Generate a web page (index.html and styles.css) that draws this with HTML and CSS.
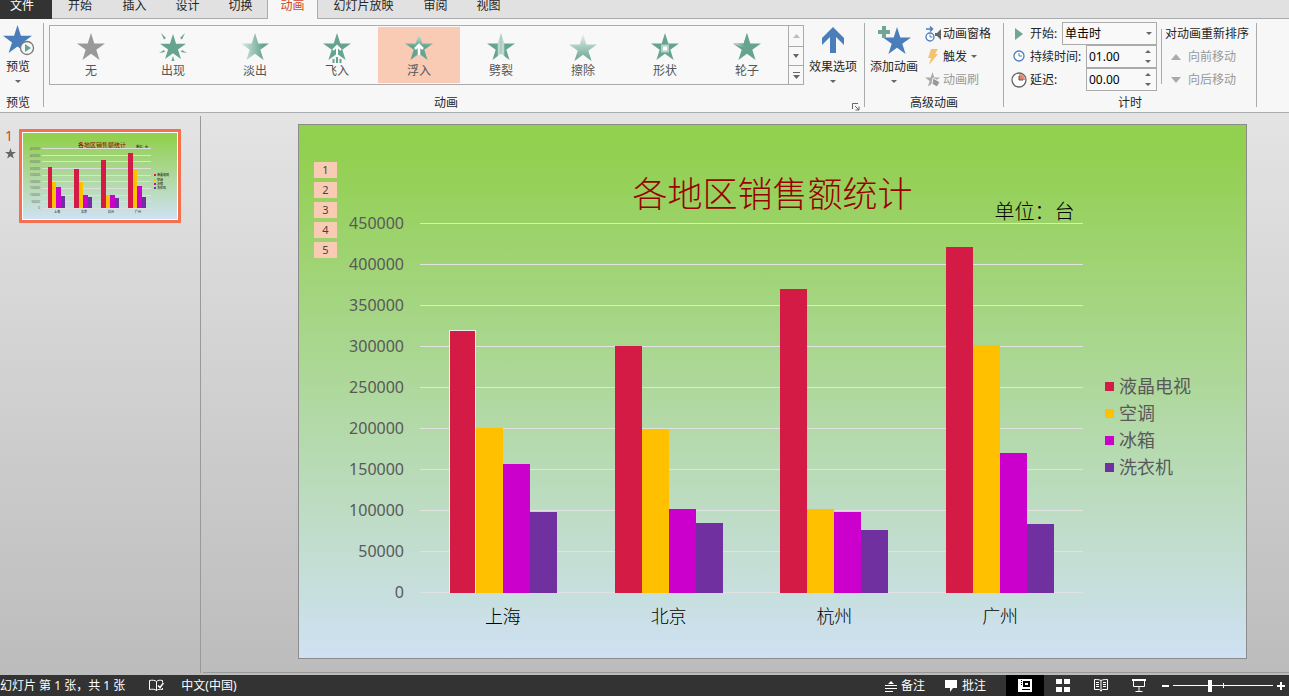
FILE: index.html
```html
<!DOCTYPE html>
<html lang="zh-CN">
<head>
	<meta charset="utf-8">
	<title>各地区销售额统计</title>
	<link rel="stylesheet" href="styles.css">
</head>
<body>
	<svg class="defs" width="0" height="0">
		<defs>
			<linearGradient id="fade"><stop offset="0" stop-color="#dcebe5"/><stop offset=".8" stop-color="#66a48f"/></linearGradient>
			<linearGradient id="float" x2="0" y2="1"><stop offset="0" stop-color="#dcebe5"/><stop offset=".5" stop-color="#66a48f"/></linearGradient>
			<linearGradient id="wipe" x2="0" y2="1"><stop offset="0" stop-color="#e4efeb"/><stop offset="1" stop-color="#66a48f"/></linearGradient>
			<linearGradient id="split"><stop offset=".36" stop-color="#66a48f"/><stop offset=".42" stop-color="#cfe2db"/><stop offset=".5" stop-color="#a2c8bb"/><stop offset=".58" stop-color="#cfe2db"/><stop offset=".64" stop-color="#66a48f"/></linearGradient>
			<linearGradient id="green" x2="0" y2="1"><stop offset=".05" stop-color="#92d050"/><stop offset="1" stop-color="#cfe1f3"/></linearGradient>
		</defs>
		<symbol id="star" viewBox="0 0 28 28"><path d="M14 0l3.3 10.4H28l-8.7 6.4L22.6 27 14 20.8 5.4 27l3.3-10.2L0 10.4h10.7z"/></symbol>
	</svg>

	<nav class="tabs">
		<a href="#" class="file">文件</a>
		<a href="#">开始</a>
		<a href="#">插入</a>
		<a href="#">设计</a>
		<a href="#">切换</a>
		<a href="#" class="active">动画</a>
		<a href="#" class="wide">幻灯片放映</a>
		<a href="#">审阅</a>
		<a href="#">视图</a>
	</nav>

	<section class="ribbon">
		<div class="group preview">
			<div class="body">
				<button class="big">
					<svg width="34" height="34" viewBox="0 0 34 34"><use href="#star" x="2" y="2" width="29" height="29" fill="#4a7ebb"/><circle cx="26" cy="25" r="6.5" fill="#f7f7f7" stroke="#777" stroke-width="1.3"/><path d="M24 21v8l6-4z" fill="#66a48f"/></svg>
					<span>预览</span>
					<i class="caret"></i>
				</button>
			</div>
			<footer>预览</footer>
		</div>
		<i class="sep"></i>

		<div class="group animation">
			<div class="body">
				<div class="gallery">
					<button><svg width="28" height="28"><use href="#star" fill="#999"/></svg>无</button>
					<button><svg width="28" height="28"><use href="#star" x="1" y="1" width="26" height="26" fill="#66a48f"/><path d="M2 0l5 5-2 1.500zM26 0l-5 5 2 1.500zM0 20l5-3 1 2zM28 20l-5-3-1 2zM12.500 28l1.500-5 1.500 5z" fill="#66a48f"/></svg>出现</button>
					<button><svg width="28" height="28"><use href="#star" fill="url(#fade)"/></svg>淡出</button>
					<button><svg width="28" height="30"><use href="#star" width="28" height="28" fill="#66a48f"/><path d="M9.500 24h9v6h-9z" fill="#f7f7f7"/><path d="M14 24V13M10 17l4-4 4 4" fill="none" stroke="#fff" stroke-width="2"/><path d="M10.500 26v4M14 24v6M17.500 26v4" stroke="#66a48f" stroke-width="2"/></svg>飞入</button>
					<button class="on"><svg width="28" height="28"><use href="#star" fill="url(#float)"/><path d="M14 22V12M10 16l4-4 4 4" fill="none" stroke="#fff" stroke-width="2.500"/></svg>浮入</button>
					<button><svg width="28" height="28"><use href="#star" fill="url(#split)"/></svg>劈裂</button>
					<button><svg width="28" height="28"><use href="#star" y="1" fill="url(#wipe)"/></svg>擦除</button>
					<button><svg width="28" height="28"><use href="#star" fill="#66a48f"/><path d="M11 12.500h6v6h-6z" fill="#fff" stroke="#b5d2c8" stroke-width="2"/></svg>形状</button>
					<button><svg width="28" height="28"><use href="#star" fill="#66a48f"/><path d="M0 10.400h10.700L14 0v16z" fill="url(#fade)"/></svg>轮子</button>
					<div class="scroller">
						<button aria-label="上一行"><svg width="7" height="4"><path d="M0 4l3.500-4L7 4z" fill="#bbb"/></svg></button>
						<button aria-label="下一行"><svg width="7" height="4"><path d="M0 0h6L3 4z" fill="#666"/></svg></button>
						<button aria-label="其他"><svg width="7" height="7"><path d="M0 0h7v1H0zM0 3h7L3.500 7z" fill="#666"/></svg></button>
					</div>
				</div>
				<button class="big effect">
					<svg width="34" height="34" viewBox="0 0 34 34"><path d="M17 4l11 11v7l-8-8v16h-6V14l-8 8v-7z" fill="#4a7ebb"/></svg>
					<span>效果选项</span>
					<i class="caret"></i>
				</button>
			</div>
			<footer>动画
				<button class="launcher" aria-label="更多动画选项"><svg width="8" height="8"><path d="M.5 6V.5H6M3 3l4 4M7 3.500V7H3.500" fill="none" stroke="#666"/></svg></button>
			</footer>
		</div>
		<i class="sep"></i>

		<div class="group advanced">
			<div class="body">
				<button class="big">
					<svg width="34" height="34" viewBox="0 0 34 34"><use href="#star" x="6" y="4" width="28" height="28" fill="#4a7ebb"/><path d="M5 3h4v4h4v4H9v4H5v-4H1V7h4z" fill="#6fa794"/></svg>
					<span>添加动画</span>
					<i class="caret"></i>
				</button>
				<div class="rows">
					<button><svg width="18" height="16"><path d="M1 3h6M5 .5L7.500 3 5 5.500" fill="none" stroke="#4a7ebb" stroke-width="1.500"/><circle cx="5" cy="11" r="4" fill="#fff" stroke="#4a7ebb" stroke-width="1.300"/><path d="M5 8.500V11h2.500" fill="none" stroke="#4a7ebb"/><path d="M10 7h2l4-4v11l-4-4h-2z" fill="#666"/></svg>动画窗格</button>
					<button><svg width="18" height="16"><path d="M6 0h7l-3 5h3L4 16l2-7H3z" fill="#f2c46d"/></svg>触发<i class="caret"></i></button>
					<button disabled><svg width="18" height="16"><use href="#star" width="15" height="15" fill="#aaa"/><path d="M8 6l7 4-3 5-5-3z" fill="#999" stroke="#f7f7f7"/></svg>动画刷</button>
				</div>
			</div>
			<footer>高级动画</footer>
		</div>
		<i class="sep"></i>

		<div class="group timing">
			<div class="body">
				<div class="fields">
					<div class="field">
						<svg width="16" height="16"><path d="M4 2v12l8-6z" fill="#6fa794"/></svg>
						<label for="start">开始:</label>
						<select id="start"><option>单击时</option></select>
					</div>
					<div class="field">
						<svg width="16" height="16"><circle cx="8" cy="7" r="5" fill="#fff" stroke="#4a7ebb" stroke-width="1.300"/><path d="M8 4v3h3" fill="none" stroke="#4a7ebb"/></svg>
						<label for="duration">持续时间:</label>
						<input id="duration" type="text" value="01.00">
					</div>
					<div class="field">
						<svg width="16" height="16"><circle cx="8" cy="8" r="7" fill="#fff" stroke="#666" stroke-width="1.300"/><path d="M8 8V2a6 6 0 0 1 6 6z" fill="#e8836a"/><path d="M8 4v4h4" fill="none" stroke="#555"/></svg>
						<label for="delay">延迟:</label>
						<input id="delay" type="text" value="00.00">
					</div>
				</div>
				<div class="reorder">
					<span>对动画重新排序</span>
					<button disabled><svg width="10" height="6"><path d="M0 6l5-6 5 6z" fill="#aaa"/></svg>向前移动</button>
					<button disabled><svg width="10" height="6"><path d="M0 0h10L5 6z" fill="#aaa"/></svg>向后移动</button>
				</div>
			</div>
			<footer>计时</footer>
		</div>
		<i class="sep"></i>
	</section>

	<main>
		<aside>
			<div class="number">
				1
				<svg width="11" height="11"><use href="#star" fill="#666"/></svg>
			</div>
			<a href="#" class="thumb" aria-label="幻灯片 1">
				<svg viewBox="0 0 154 86">
					<rect width="154" height="86" fill="url(#green)"/>
					<text x="79" y="14" font-size="6" fill="#900" text-anchor="middle">各地区销售额统计</text>
					<text x="113" y="15" font-size="3">单位：台</text>
					<path d="M19 15.500h109M19 22.500h109M19 28.500h109M19 35.500h109M19 42.500h109M19 48.500h109M19 55.500h109M19 62.500h109M19 68.500h109M19 75.500h109" stroke="#dedede"/>
					<g font-size="3" fill="#666" text-anchor="end">
						<text x="17" y="17">450000</text><text x="17" y="24">400000</text><text x="17" y="30">350000</text><text x="17" y="37">300000</text><text x="17" y="43">250000</text>
						<text x="17" y="50">200000</text><text x="17" y="56">150000</text><text x="17" y="63">100000</text><text x="17" y="70">50000</text><text x="17" y="76">0</text>
					</g>
					<g shape-rendering="crispEdges">
						<path d="M25 75V34h4v41zM51 75V36h5v39zM78 75V27h5v48zM105 75V20h5v55z" fill="#d41b46"/>
						<path d="M29 75V49h4v26zM56 75V49h4v26zM83 75V62h4v13zM110 75V36h4v39z" fill="#ffc000"/>
						<path d="M33 75V54h5v21zM60 75V62h5v13zM87 75V62h5v13zM114 75V53h5v22z" fill="#c0c"/>
						<path d="M38 75V63h4v12zM65 75V64h4v11zM92 75V65h4v10zM119 75V64h4v11z" fill="#7030a0"/>
						<path d="M131 41h2v2h-2z" fill="#d41b46"/><path d="M131 46h2v2h-2z" fill="#ffc000"/><path d="M131 50h2v2h-2z" fill="#c0c"/><path d="M131 54h2v2h-2z" fill="#7030a0"/>
					</g>
					<g font-size="3">
						<text x="31" y="80">上海</text><text x="58" y="80">北京</text><text x="85" y="80">杭州</text><text x="112" y="80">广州</text>
						<text x="134" y="43">液晶电视</text><text x="134" y="48">空调</text><text x="134" y="52">冰箱</text><text x="134" y="56">洗衣机</text>
					</g>
				</svg>
			</a>
		</aside>

		<section class="stage">
			<article class="slide">
				<ol class="tags">
					<li>1</li><li>2</li><li>3</li><li>4</li><li>5</li>
				</ol>
				<header>
					<h1>各地区销售额统计</h1>
					<p>单位：台</p>
				</header>
				<div class="chart">
					<div class="axis">
						<span>450000</span><span>400000</span><span>350000</span><span>300000</span><span>250000</span>
						<span>200000</span><span>150000</span><span>100000</span><span>50000</span><span>0</span>
					</div>
					<div class="plot">
						<div class="city">
							<div class="bars">
								<i class="tv selected" style="height:71%"></i><i class="ac" style="height:44.7%"></i><i class="fridge" style="height:35%"></i><i class="washer" style="height:22%"></i>
							</div>
							<span>上海</span>
						</div>
						<div class="city">
							<div class="bars">
								<i class="tv" style="height:66.7%"></i><i class="ac" style="height:44.2%"></i><i class="fridge" style="height:22.8%"></i><i class="washer" style="height:19%"></i>
							</div>
							<span>北京</span>
						</div>
						<div class="city">
							<div class="bars">
								<i class="tv" style="height:82.2%"></i><i class="ac" style="height:22.8%"></i><i class="fridge" style="height:22%"></i><i class="washer" style="height:17.1%"></i>
							</div>
							<span>杭州</span>
						</div>
						<div class="city">
							<div class="bars">
								<i class="tv" style="height:93.5%"></i><i class="ac" style="height:66.9%"></i><i class="fridge" style="height:37.9%"></i><i class="washer" style="height:18.7%"></i>
							</div>
							<span>广州</span>
						</div>
					</div>
					<ul class="legend">
						<li><i class="tv"></i>液晶电视</li>
						<li><i class="ac"></i>空调</li>
						<li><i class="fridge"></i>冰箱</li>
						<li><i class="washer"></i>洗衣机</li>
					</ul>
				</div>
			</article>
		</section>
	</main>

	<footer class="status">
		<span>幻灯片 第 1 张，共 1 张</span>
		<button class="spell" aria-label="拼写检查"><svg width="15" height="13" fill="none" stroke="#fff"><path d="M7.500 2.500v9M7.500 2.500C6 1 3 1 .5 1.500v9c2.500-.5 5.500-.5 7 1 1-1 3-1.500 6-1V9M7.500 2.500C9 1 11 1 13.500 1.500v2"/><path d="M9 6.500l2 2 3.500-4.500" stroke-width="1.500"/></svg></button>
		<button>中文(中国)</button>
		<div class="tools">
			<button class="notes"><svg width="12" height="12"><path d="M3 4l3-3 3 3zM0 5h12v1H0zM0 8h12v1H0zM0 11h8v1H0z" fill="#fff"/></svg>备注</button>
			<button class="notes"><svg width="13" height="12"><path d="M0 0h12v8H8l-3 4V8H0z" fill="#fff"/></svg>批注</button>
			<div class="views">
				<button class="on" aria-label="普通视图"><svg width="14" height="13"><path d="M0 0h14v13H0zM3 1v1h1V1zM3 3v1h1V3zM3 5v1h1V5zM5 2v6h7V2zM4 10v1h8v-1z" fill="#fff" fill-rule="evenodd"/><path d="M7 4h3v2H7z" fill="#fff"/></svg></button>
				<button aria-label="幻灯片浏览"><svg width="14" height="13" fill="#fff"><path d="M0 0h6v5H0zM8 0h6v5H8zM0 8h6v5H0zM8 8h6v5H8z"/></svg></button>
				<button aria-label="阅读视图"><svg width="14" height="13" fill="none" stroke="#fff"><path d="M7 1.500v11M7 1.500C5 .5 3 .5.5.5v10h5L7 12l1.500-1.500h5V.5C11 .5 9 .5 7 1.500M2 3.500h3M2 5.500h3M2 7.500h3M9 3.500h3M9 5.500h3M9 7.500h3"/></svg></button>
				<button aria-label="幻灯片放映"><svg width="14" height="13" fill="none" stroke="#fff"><path d="M0 1h14" stroke-width="2"/><path d="M1.500 2v5.500h11V2M7 8v4M3.500 12.500h7"/></svg></button>
			</div>
			<button aria-label="缩小"><svg width="7" height="9"><path d="M0 4h7v2H0z" fill="#fff"/></svg></button>
			<input type="range" class="zoom" min="0" max="100" value="36" aria-label="显示比例">
			<button aria-label="放大"><svg width="8" height="9"><path d="M0 4h3V1h2v3h3v2H5v3H3V6H0z" fill="#fff"/></svg></button>
		</div>
	</footer>
</body>
</html>
```
FILE: styles.css
```css
* { box-sizing: border-box; }
body {
	margin: 0;
	min-height: 100vh;
	display: flex;
	flex-direction: column;
	font: 12px/16px "Noto Sans", "Noto Sans CJK SC", sans-serif;
	color: #262626;
	background: #bdbdbd;
}
button, input, select { font: inherit; color: inherit; }
button { border: 0; padding: 0; background: none; white-space: nowrap; }
button:disabled { color: #999; }
svg { display: block; flex: none; }
ol, ul, h1, p { margin: 0; padding: 0; list-style: none; font-weight: normal; }
.defs { position: absolute; }

/* tabs */
.tabs { display: flex; height: 19px; background: #e1e1e1; }
.tabs::after { content: ""; flex: 1; border-bottom: 1px solid #a9abad; }
.tabs a {
	width: 53px;
	line-height: 12px;
	text-align: center;
	color: #262626;
	text-decoration: none;
	border-bottom: 1px solid #a9abad;
}
.tabs .file { width: 52px; padding-right: 8px; color: #fff; background: #333; border-color: #333; }
.tabs a:nth-child(2) { width: 56px; }
.tabs .active { width: 51px; color: #d24726; background: #f7f7f7; border: solid #a9abad; border-width: 0 1px; }
.tabs .wide { width: 91px; }

/* ribbon */
.ribbon { display: flex; height: 94px; background: #f7f7f7; border-bottom: 1px solid #a9abad; }
.sep { width: 1px; margin: 4px 0 5px; background: #a9abad; }
.group { padding-top: 3px; }
.group .body { display: flex; height: 72px; }
.group footer { position: relative; line-height: 18px; text-align: center; }
.caret { border: 3px solid transparent; border-top-color: #666; border-bottom: 0; }
.big { display: flex; flex-direction: column; align-items: center; }
.big svg { height: 36px; }
.big span { line-height: 18px; }
.big .caret { margin-top: 4px; }

.preview { width: 43px; padding-right: 7px; }
.preview .big { width: 36px; }
.animation { padding-left: 5px; }
.animation footer { padding-right: 21px; }
.gallery { display: flex; height: 60px; margin-top: 3px; border: 1px solid #a9abad; background: #f8f8f8; }
.gallery > button {
	display: flex;
	flex-direction: column;
	align-items: center;
	justify-content: space-between;
	width: 82px;
	margin: 1px 0;
	padding: 6px 0 4px;
	line-height: 16px;
	color: #555;
}
.gallery > button svg { height: 28px; overflow: visible; }
.gallery .on { background: #f9cbb5; }
.scroller { display: grid; grid-template-rows: 20px 19px 19px; width: 15px; border-left: 1px solid #a9abad; }
.scroller button { display: grid; place-items: center; }
.scroller button + button { border-top: 1px solid #a9abad; }
.effect { width: 60px; padding-right: 2px; }
.launcher { position: absolute; right: 4px; bottom: 1px; }

.advanced .big { width: 60px; padding-right: 2px; }
.rows { display: flex; flex-direction: column; width: 78px; }
.rows button { display: flex; align-items: center; height: 23px; }
.rows .caret { margin-left: 4px; }

.timing .body { width: 252px; }
.fields { width: 153px; padding-left: 7px; }
.field { display: flex; align-items: center; height: 23px; }
.field label { margin: 0 auto 0 3px; }
.field select, .field input {
	height: 23px;
	border: 1px solid #ababab;
	border-radius: 0;
	padding: 0 2px;
	color: #000;
	background: #f9f9f9 no-repeat;
}
.field select {
	width: 95px;
	appearance: none;
	background-image: url("data:image/svg+xml,%3Csvg xmlns='http://www.w3.org/2000/svg' width='6' height='3'%3E%3Cpath d='M0 0h6L3 3z' fill='%23666'/%3E%3C/svg%3E");
	background-position: right 4px center;
}
.field input {
	width: 71px;
	background-image: url("data:image/svg+xml,%3Csvg xmlns='http://www.w3.org/2000/svg' width='6' height='13'%3E%3Cpath d='M0 3h6L3 0zM0 10h6l-3 3z' fill='%23666'/%3E%3C/svg%3E");
	background-position: right 5px center;
}
.reorder { display: flex; flex-direction: column; align-self: flex-start; margin-left: 4px; padding-left: 4px; background: linear-gradient(#a9abad, #a9abad) 0 7px / 1px 55px no-repeat; }
.reorder span { line-height: 23px; white-space: nowrap; }
.reorder button { display: flex; align-items: center; gap: 7px; height: 23px; padding-left: 6px; }

/* workspace */
main { display: flex; flex: 1; background: linear-gradient(#e4e4e4, #bcbcbc); }
aside { display: flex; align-items: flex-start; width: 201px; margin: 3px 0 2px; padding-top: 13px; border-right: 1px solid #999; }
.number { width: 19px; padding-left: 5px; font-size: 14px; line-height: 13px; color: #d24726; }
.number svg { margin-top: 6px; }
.thumb { width: 162px; padding: 1px; border: 3px solid #f4704f; background: #fff; }
.stage { display: flex; flex: 1; margin: 0 0 2px 2px; padding: 11px 42px 13px 95px; border-bottom: 1px solid #999; }

/* slide */
.slide { position: relative; flex: 1; border: 1px solid #8c8c8c; background: linear-gradient(#92d050 5%, #cfe1f3); }
.tags { position: absolute; left: 15px; top: 37px; }
.tags li { width: 23px; height: 16px; margin-bottom: 4px; font-size: 11px; text-align: center; color: #444; background: #f9cbb5; }
.slide header { display: grid; grid-template-columns: 1fr auto 1fr; height: 78px; padding-top: 43px; }
.slide h1 { grid-column: 2; font-size: 35px; font-weight: 300; line-height: 52px; color: #900; }
.slide header p { margin: 32px 0 0 82px; font-size: 20px; font-weight: 300; line-height: 24px; color: #000; white-space: nowrap; }
.chart { display: flex; padding-left: 35px; font-size: 18px; font-weight: 300; }
.axis { display: flex; flex-direction: column; width: 70px; font-size: 16px; font-weight: 400; line-height: 41px; text-align: right; color: #595959; }
.plot {
	display: flex;
	flex: 1;
	height: 370px;
	margin: 20px 22px 0 16px;
	background: repeating-linear-gradient(#e0e3e0 0 1px, transparent 1px 41px);
}
.city { flex: 1; text-align: center; color: #000; }
.bars { display: flex; align-items: flex-end; justify-content: center; height: 370px; }
.bars i { width: 27px; }
.city span { display: block; margin-top: 10px; line-height: 26px; }
.selected { border: 1px solid #eee; border-bottom: 0; }
.tv { background: #d41b46; }
.ac { background: #ffc000; }
.fridge { background: #c0c; }
.washer { background: #7030a0; }
.legend { width: 141px; margin-top: 170px; color: #595959; }
.legend li { display: flex; align-items: center; gap: 5px; line-height: 27px; }
.legend i { width: 9px; height: 9px; }

/* status bar */
.status { display: flex; align-items: center; height: 21px; color: #fff; background: #333; }
.status button { display: flex; align-items: center; }
.spell { margin: 0 17px 0 24px; }
.tools { display: flex; align-items: center; margin-left: auto; padding-right: 4px; }
.notes { gap: 4px; margin-right: 20px; }
.views { display: flex; margin-right: 4px; }
.views button { justify-content: center; width: 38px; height: 21px; }
.views .on { background: #000; }
.zoom {
	appearance: none;
	width: 100px;
	height: 12px;
	margin: 0 4px;
	background: linear-gradient(#fff, #fff) 50% 50% / 1px 5px no-repeat, linear-gradient(#fff, #fff) 0 50% / 100% 1px no-repeat;
}
.zoom::-webkit-slider-thumb { appearance: none; width: 4px; height: 12px; background: #fff; }
```
